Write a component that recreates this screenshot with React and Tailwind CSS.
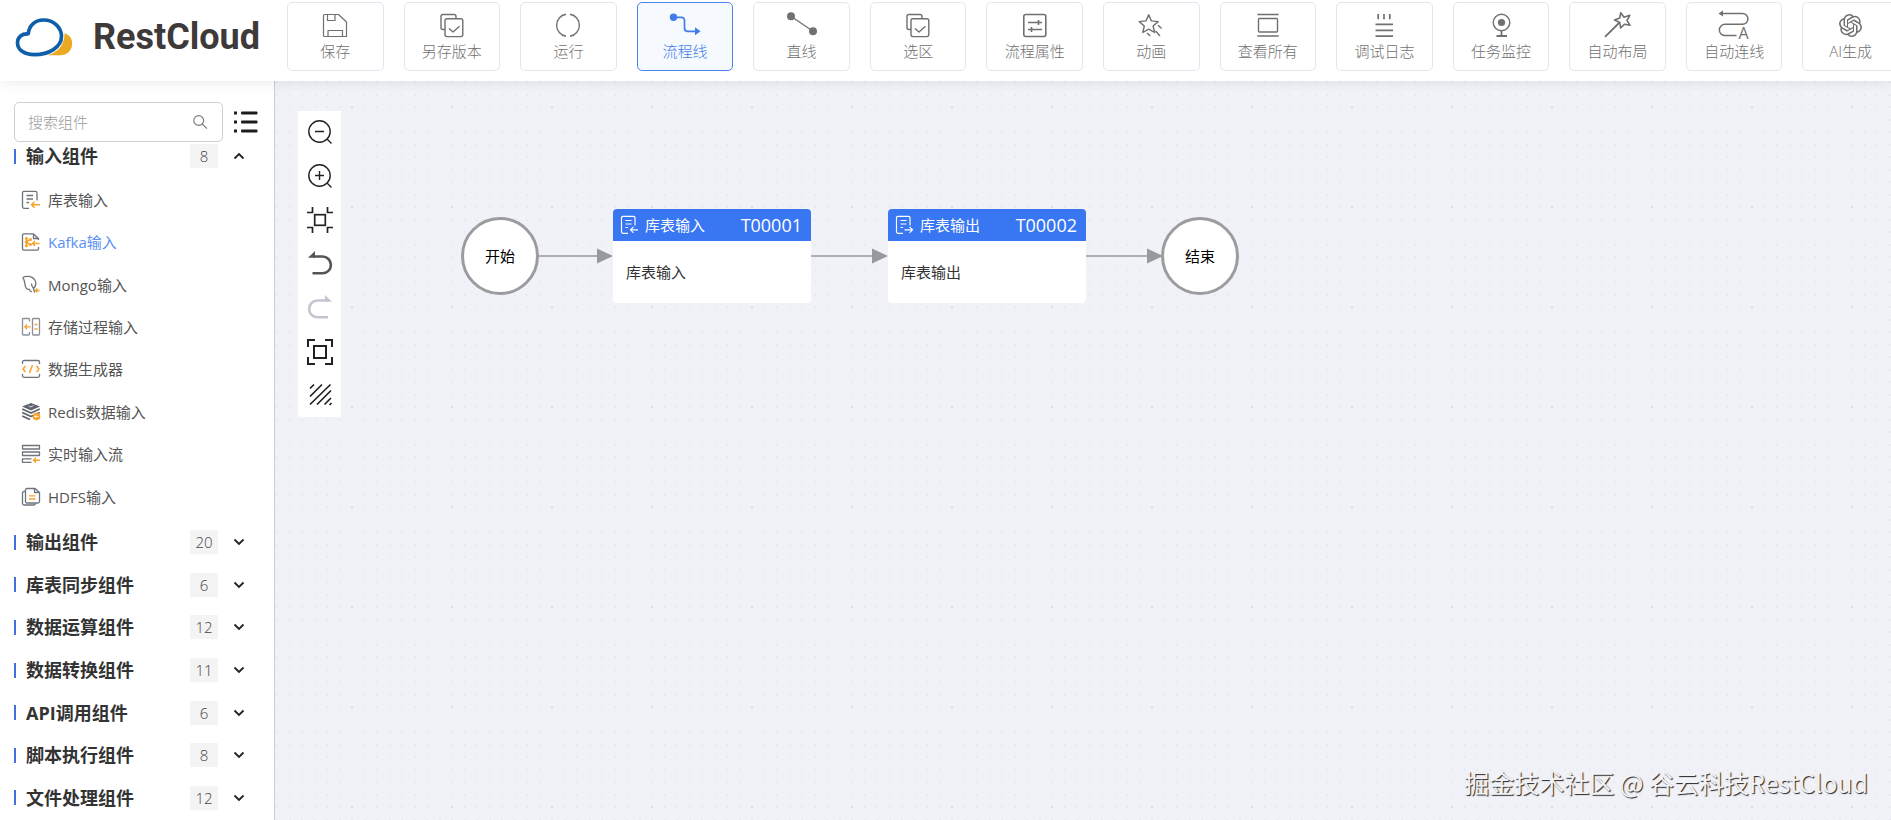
import { useState } from 'react'
import { SiOpenai } from 'react-icons/si'

/* ---------- Toolbar icons (32 x 28) ---------- */

function ToolIcon({ children }) {
  return (
    <svg viewBox="0 0 32 28" className="w-8 h-7 overflow-visible" fill="none" stroke="currentColor" strokeWidth="1.4" strokeLinejoin="round">
      {children}
    </svg>
  )
}

const SaveIcon = () => (
  <ToolIcon>
    <path d="M5.5 3.5H19.5L27.5 11V25.5H5.5a1 1 0 0 1-1-1V4.5a1 1 0 0 1 1-1z" strokeWidth="1.2" />
    <path d="M8.5 3.5V9.5H16V3.5M9 25.5V19.5H23.5V25.5" strokeWidth="1.2" />
  </ToolIcon>
)

const CopyIcon = () => (
  <ToolIcon>
    <path d="M9 18.5H7a2 2 0 0 1-2-2V5.5a2 2 0 0 1 2-2H18a2 2 0 0 1 2 2V7.5" />
    <rect x="9" y="7.8" width="17.8" height="17.8" rx="2" />
    <path d="M13 17.5L17 21L23.5 15.3" />
  </ToolIcon>
)

const RunIcon = () => (
  <ToolIcon>
    <path d="M14 3.2A11.2 11.2 0 0 0 14 25.3M18 3.2A11.2 11.2 0 0 1 18 25.3" />
  </ToolIcon>
)

const FlowIcon = () => (
  <ToolIcon>
    <circle cx="4.5" cy="6.3" r="3.7" fill="currentColor" stroke="none" />
    <path d="M4.5 6.3H12.5a3 3 0 0 1 3 3V17.3a3 3 0 0 0 3 3H27" strokeWidth="1.7" />
    <path d="M26 16.3L31.5 20.3L26 24.3z" fill="currentColor" stroke="none" />
  </ToolIcon>
)

const LineIcon = () => (
  <ToolIcon>
    <path d="M5 5.3L27 20.3" strokeWidth="1.3" />
    <circle cx="5" cy="5.3" r="4" fill="currentColor" stroke="none" />
    <circle cx="27" cy="20.3" r="4" fill="currentColor" stroke="none" />
  </ToolIcon>
)

const PropsIcon = () => (
  <ToolIcon>
    <rect x="4.8" y="3.5" width="22" height="22" rx="2" strokeWidth="1.6" />
    <path d="M9 11.5H23M19.5 9V14M9 18.5H23M12.5 16V21" strokeWidth="1.6" />
  </ToolIcon>
)

const AnimIcon = () => (
  <ToolIcon>
    <path d="M13.7 3.8L16.4 9.9L23.2 10.6L18.1 15L19.6 21.5L13.7 18.1L7.8 21.5L9.3 15L4.2 10.6L11 9.9z" />
    <path d="M23 14.3L26.6 17.5M20.6 20L25 25M12 22L15.3 25" />
  </ToolIcon>
)

const ViewAllIcon = () => (
  <ToolIcon>
    <path d="M5.3 3.5H26.7M5.3 25H26.7" />
    <rect x="6.5" y="7.5" width="19" height="13.5" rx="1" />
  </ToolIcon>
)

const LogIcon = () => (
  <ToolIcon>
    <path d="M10.2 3V8.3M16 3V8.3M21.8 3V8.3M7.5 13.3H25M7.5 19.3H25M7.5 25.2H25" strokeWidth="1.7" />
  </ToolIcon>
)

const MonitorIcon = () => (
  <ToolIcon>
    <circle cx="16.5" cy="11.5" r="8.3" />
    <circle cx="16.5" cy="11.5" r="3.6" fill="currentColor" stroke="none" />
    <path d="M16.5 20V25M11.5 25H22" strokeWidth="1.8" />
  </ToolIcon>
)

const WandIcon = () => (
  <ToolIcon>
    <path d="M3 25.8L17.5 11.5" strokeWidth="1.8" />
    <path d="M18.7 1.8L22 6.3L27.8 4.3L25 9.5L28 14.3L22.6 13.2L18.6 17L17.8 11.5L12.5 9L17.7 7z" strokeWidth="1.6" />
  </ToolIcon>
)

const AutoLineIcon = () => (
  <ToolIcon>
    <path d="M4 2.5H24.5a5.4 5.4 0 0 1 0 10.8H7a5.6 5.6 0 0 0 0 11.3H18.5" strokeWidth="1.5" />
    <path d="M0.5 2.5L5 -0.5V5.5z" fill="currentColor" stroke="none" />
    <text x="20.5" y="28" fontSize="16" fontWeight="400" fill="currentColor" stroke="none" fontFamily="Open Sans, sans-serif">A</text>
  </ToolIcon>
)

const AiIcon = () => (
  <span className="w-8 h-7 flex items-center justify-center">
    <SiOpenai size={23} />
  </span>
)

const TOOLS = [
  { label: '保存',     Icon: SaveIcon },
  { label: '另存版本', Icon: CopyIcon },
  { label: '运行',     Icon: RunIcon },
  { label: '流程线',   Icon: FlowIcon },
  { label: '直线',     Icon: LineIcon },
  { label: '选区',     Icon: CopyIcon },
  { label: '流程属性', Icon: PropsIcon },
  { label: '动画',     Icon: AnimIcon },
  { label: '查看所有', Icon: ViewAllIcon },
  { label: '调试日志', Icon: LogIcon },
  { label: '任务监控', Icon: MonitorIcon },
  { label: '自动布局', Icon: WandIcon },
  { label: '自动连线', Icon: AutoLineIcon },
  { label: 'AI生成',   Icon: AiIcon },
]

/* ---------- Component list icons (20 x 20) ---------- */

function ItemIcon({ children }) {
  return (
    <svg viewBox="0 0 20 20" className="w-5 h-5 shrink-0" fill="none" stroke="#6f747c" strokeWidth="1.3" strokeLinejoin="round">
      {children}
    </svg>
  )
}

const ORANGE = '#f7a32b'

const TableInIcon = () => (
  <ItemIcon>
    <path d="M8 18.3H3a1.5 1.5 0 0 1-1.5-1.5V2.8A1.5 1.5 0 0 1 3 1.3H14.5a1.5 1.5 0 0 1 1.5 1.5V10.5" />
    <path d="M5.5 5.5H12M5.5 9H12M5.5 12.5H8" />
    <path d="M19 14.8H10.5M13.5 11.8L10.5 14.8L13.5 17.8" stroke={ORANGE} strokeWidth="1.5" />
  </ItemIcon>
)

const KafkaIcon = () => (
  <ItemIcon>
    <path d="M17.5 15V16.8a1.3 1.3 0 0 1-1.3 1.3H2.8a1.3 1.3 0 0 1-1.3-1.3V3.2A1.3 1.3 0 0 1 2.8 1.9H12.5L17.5 6.5V8M12.5 1.9V6.5H17.5" />
    <path d="M5.5 5.5V14.5M5.5 10L9.5 7M5.5 10L9.5 13" stroke={ORANGE} strokeWidth="1.5" />
    <g fill={ORANGE} stroke="none">
      <circle cx="5.5" cy="6.5" r="1.5" /><circle cx="5.5" cy="10" r="1.8" /><circle cx="5.5" cy="13.8" r="1.5" />
      <circle cx="9.5" cy="7.5" r="1.5" /><circle cx="9.5" cy="12.5" r="1.5" />
    </g>
    <path d="M18.5 11.5H11.5M14 9L11.5 11.5L14 14" stroke={ORANGE} strokeWidth="1.4" />
  </ItemIcon>
)

const MongoIcon = () => (
  <ItemIcon>
    <path d="M1.5 2.5C5 0.5 11 1 13.5 4.5C15.5 7.5 15 11 12.5 13.5C11 12 10.5 10.5 10.5 8.5M12.5 13.5L13.5 17.5M1.5 2.5C3.5 4 3.5 6.5 4 9.5C4.3 12.5 6 14.5 8.5 14.5C8.5 15.5 9.5 16.5 11 17" />
    <path d="M18.5 15.5H14.5M16.3 13.5L14.5 15.5L16.3 17.5" stroke={ORANGE} strokeWidth="1.4" />
  </ItemIcon>
)

const ProcIcon = () => (
  <ItemIcon>
    <path d="M8.5 4.5V2.5a1 1 0 0 0-1-1H2.5a1 1 0 0 0-1 1V17a1 1 0 0 0 1 1H7.5a1 1 0 0 0 1-1V15" stroke="#8a9099" />
    <rect x="11.5" y="1.5" width="7" height="16.5" rx="1" stroke="#8a9099" />
    <path d="M9.5 9.8H3.8M6 7.5L3.8 9.8L6 12.2M13.5 7.5H16.5M13.5 12H16.5" stroke={ORANGE} />
  </ItemIcon>
)

const CodeIcon = () => (
  <ItemIcon>
    <path d="M1.5 5V3a1.5 1.5 0 0 1 1.5-1.5H17A1.5 1.5 0 0 1 18.5 3V5M1.5 15V16.8a1.5 1.5 0 0 0 1.5 1.5H17a1.5 1.5 0 0 0 1.5-1.5V15" />
    <path d="M4.5 7L2 10L4.5 13M15.5 7L18 10L15.5 13M11.5 6L8.5 14" stroke={ORANGE} strokeWidth="1.5" />
  </ItemIcon>
)

const RedisIcon = () => (
  <ItemIcon>
    <path d="M10 1L19 4.5L10 8.5L1 4.5z" fill="#5d636c" stroke="none" />
    <path d="M7.5 3.8L9.5 5L12.5 3.5" stroke="#fff" strokeWidth="0.8" />
    <path d="M1.2 7L10 11L18.8 7M1.2 10.5L10 14.5L18.8 10.5M1.2 14L9 17.5" stroke="#5d636c" strokeWidth="1.8" />
    <circle cx="15.5" cy="14.5" r="3.8" fill={ORANGE} stroke="none" />
    <path d="M17.5 14.5H13.7M15.2 13L13.7 14.5L15.2 16" stroke="#fff" strokeWidth="0.8" />
  </ItemIcon>
)

const StreamIcon = () => (
  <ItemIcon>
    <rect x="1.5" y="1.5" width="17" height="3.5" />
    <rect x="1.5" y="8" width="17" height="3.5" />
    <path d="M10.5 14.8H1.5V18.3H10.5" />
    <path d="M19 16.3H12.5M15 13.8L12.5 16.3L15 18.8" stroke={ORANGE} strokeWidth="1.5" />
  </ItemIcon>
)

const HdfsIcon = () => (
  <ItemIcon>
    <path d="M4 4.5H3A1.5 1.5 0 0 0 1.5 6V16.5A1.5 1.5 0 0 0 3 18H12.5a2 2 0 0 0 2-1.5" />
    <path d="M6 1.5H14L18.5 5.5V14.5a1.5 1.5 0 0 1-1.5 1.5H6a1.5 1.5 0 0 1-1.5-1.5V3A1.5 1.5 0 0 1 6 1.5zM13.5 1.5V5.5H18.5" />
    <path d="M8 8.8H14.5M8 12H14.5" stroke={ORANGE} />
  </ItemIcon>
)

const INPUT_ITEMS = [
  { name: '库表输入',      Icon: TableInIcon },
  { name: 'Kafka输入',     Icon: KafkaIcon },
  { name: 'Mongo输入',     Icon: MongoIcon },
  { name: '存储过程输入',  Icon: ProcIcon },
  { name: '数据生成器',    Icon: CodeIcon },
  { name: 'Redis数据输入', Icon: RedisIcon },
  { name: '实时输入流',    Icon: StreamIcon },
  { name: 'HDFS输入',      Icon: HdfsIcon },
]

const GROUPS = [
  { name: '输入组件',     count: 8, items: INPUT_ITEMS },
  { name: '输出组件',     count: 20 },
  { name: '库表同步组件', count: 6 },
  { name: '数据运算组件', count: 12 },
  { name: '数据转换组件', count: 11 },
  { name: 'API调用组件',  count: 6 },
  { name: '脚本执行组件', count: 8 },
  { name: '文件处理组件', count: 12 },
]

/* ---------- Header ---------- */

function Logo() {
  return (
    <a href="#" className="w-[287px] shrink-0 h-full flex items-center pl-[15px] pb-2">
      <svg viewBox="45 48 173 120" className="w-[58px] h-10" fill="none">
        <path d="M193 97C208 101 217 114 216 129C215 149 200 163 180 163H142C173 154 193 133 193 97z" fill="#eba922" />
        <path d="M84 99C87 72 106 57 130 57C161 57 184 79 184 106C184 139 146 161 103 161C72 161 52 146 52 125C52 108 66 97 84 99C84 99 84 101 85 103" stroke="#0f5ea8" strokeWidth="11" strokeLinejoin="round" />
      </svg>
      <span className="ml-5 font-['Roboto',sans-serif] font-bold text-[36px] leading-10 text-[#3e3a39]">RestCloud</span>
    </a>
  )
}

function Toolbar({ active, onPick }) {
  return (
    <div className="flex-1 min-w-0 overflow-hidden">
      <div className="grid grid-cols-14 gap-5 -mr-2 pt-[2px]">
        {TOOLS.map(({ label, Icon }, i) => (
          <button
            key={label}
            onClick={() => onPick(i)}
            className={`h-[69px] rounded-[5px] border flex flex-col items-center pt-2 text-[15px] leading-5 font-light whitespace-nowrap ${
              active === i ? 'border-[#4a86ea] bg-[#f6faff] text-[#3f7cea]' : 'border-[#e3e6ef] bg-white text-[#707070]'
            }`}
          >
            <Icon />
            <span className="mt-[2px]">{label}</span>
          </button>
        ))}
      </div>
    </div>
  )
}

/* ---------- Sidebar ---------- */

function Chevron({ up }) {
  return (
    <svg viewBox="0 0 12 12" className="w-3 h-3" fill="none" stroke="#222" strokeWidth="1.8">
      <path d={up ? 'M1.5 8.5L6 4L10.5 8.5' : 'M1.5 3.5L6 8L10.5 3.5'} />
    </svg>
  )
}

function Group({ group, open, onToggle }) {
  const showItems = open && group.items
  return (
    <div className={`flex flex-col ${showItems ? 'flex-[9] mb-[3px]' : 'flex-1 max-h-11'}`}>
      <button onClick={onToggle} className="flex-1 flex items-center pl-[14px] pr-[29px] text-left">
        <span className="w-[2px] h-[15px] bg-[#4070dc]" />
        <span className="ml-[10px] flex-1 text-lg leading-6 font-bold text-[#333]">{group.name}</span>
        <span className="w-7 h-6 bg-[#f4f4f4] text-center text-[15px] leading-6 font-light text-[#444]">{group.count}</span>
        <span className="ml-[15px]"><Chevron up={showItems} /></span>
      </button>
      {showItems && (
        <ul className="flex-[8] flex flex-col pt-px">
          {group.items.map(({ name, Icon }) => (
            <li key={name} className="flex-1 flex">
              <a
                href="#"
                className={`flex-1 flex items-center pl-[21px] gap-[7px] text-[15px] leading-5 ${
                  name === 'Kafka输入' ? 'text-[#5a90f2]' : 'text-[#555]'
                }`}
              >
                <Icon />
                {name}
              </a>
            </li>
          ))}
        </ul>
      )}
    </div>
  )
}

function Sidebar() {
  const [open, setOpen] = useState('输入组件')
  return (
    <aside className="w-[275px] shrink-0 flex flex-col bg-white border-r border-[#c9ccd3] pt-[21px]">
      <div className="relative z-10 flex items-center pl-[14px]">
        <label className="w-[209px] h-10 flex items-center rounded-[5px] border border-[#cfd0d4] bg-white pl-[13px] pr-[14px]">
          <input
            type="text"
            aria-label="搜索组件"
            placeholder="搜索组件"
            className="flex-1 min-w-0 text-[15px] leading-5 font-light outline-none placeholder:text-[#999]"
          />
          <svg viewBox="0 0 16 16" className="w-4 h-4" fill="none" stroke="#777" strokeWidth="1.1">
            <circle cx="6.7" cy="6.5" r="4.9" />
            <path d="M10.2 10L15 14.7" />
          </svg>
        </label>
        <button aria-label="列表" className="ml-[11px]">
          <svg viewBox="0 0 24 24" className="w-6 h-6" fill="#1c1c1c">
            <rect x="0" y="1.5" width="3" height="3" /><rect x="7" y="1.5" width="16.5" height="3" rx="1" />
            <rect x="0" y="10.5" width="3" height="3" /><rect x="7" y="10.5" width="16.5" height="3" rx="1" />
            <rect x="0" y="19.5" width="3" height="3" /><rect x="7" y="19.5" width="16.5" height="3" rx="1" />
          </svg>
        </button>
      </div>
      <nav className="flex-1 min-h-0 -mt-[7px] pb-px flex flex-col">
        {GROUPS.map(g => (
          <Group key={g.name} group={g} open={open === g.name} onToggle={() => setOpen(open === g.name ? '' : g.name)} />
        ))}
      </nav>
    </aside>
  )
}

/* ---------- Canvas ---------- */

const VIEW_TOOLS = [
  {
    name: '缩小',
    icon: <g strokeWidth="1.4"><circle cx="11.5" cy="11.5" r="10.7" /><path d="M7 11.5H16M19 19L23.5 23.5" /></g>,
  },
  {
    name: '放大',
    icon: <g strokeWidth="1.4"><circle cx="11.5" cy="11.5" r="10.7" /><path d="M7 11.5H16M11.5 7V16M19 19L23.5 23.5" /></g>,
  },
  {
    name: '适应画布',
    icon: <g strokeWidth="1.7"><rect x="6.7" y="6.7" width="10.6" height="10.6" /><path d="M-1 4.5H4.5V-1M19.5 -1V4.5H25M-1 19.5H4.5V25M25 19.5H19.5V25" /></g>,
  },
  {
    name: '撤销',
    icon: <g stroke="#555" strokeWidth="2.6"><path d="M5 4.5H14.5a8.2 8.2 0 0 1 0 16.8H4.5" /><path d="M0 5.8L7 -1V5.8z" fill="#555" stroke="none" /></g>,
  },
  {
    name: '重做',
    icon: <g stroke="#c3c5d2" strokeWidth="2.6"><path d="M19 4.5H9.5a8.2 8.2 0 0 0 0 16.8H20" /><path d="M24 5.8L17 -1V5.8z" fill="#c3c5d2" stroke="none" /></g>,
  },
  {
    name: '全屏',
    icon: <g strokeWidth="2"><rect x="6" y="6" width="12" height="12" /><path d="M0 7V0H7M17 0H24V7M0 17V24H7M17 24H24V17" /></g>,
  },
  {
    name: '网格',
    icon: <g strokeWidth="1.7"><path d="M2 4.5L6 0.5M2 12.5L14 0.5M2 20.5L22.5 0.5M9 20.5L23 6.5M16.5 20.5L23 14M21.5 21L23.5 19" /></g>,
  },
]

function ViewTools() {
  return (
    <div className="absolute left-[23px] top-[30px] w-[43px] py-[9px] bg-white flex flex-col items-center gap-5">
      {VIEW_TOOLS.map(t => (
        <button key={t.name} aria-label={t.name}>
          <svg viewBox="0 0 24 24" className="block w-6 h-6 overflow-visible" fill="none" stroke="#222">{t.icon}</svg>
        </button>
      ))}
    </div>
  )
}

function Terminal({ label, place }) {
  return (
    <div className={`absolute w-[78px] h-[78px] rounded-full border-[3px] border-[#9b9c9f] bg-white flex items-center justify-center text-[15px] leading-5 text-black ${place}`}>
      {label}
    </div>
  )
}

function TaskNode({ name, id, place, out }) {
  return (
    <div className={`absolute w-[198px] rounded-[4px] overflow-hidden bg-white ${place}`}>
      <div className="h-8 bg-[#3876f2] text-white flex items-center pl-[7px] pr-[9px]">
        <svg viewBox="0 0 20 20" className="w-5 h-5" fill="none" stroke="currentColor" strokeWidth="1.2">
          <path d="M8 18.3H3a1.5 1.5 0 0 1-1.5-1.5V2.8A1.5 1.5 0 0 1 3 1.3H13.5a1.5 1.5 0 0 1 1.5 1.5V10.5" />
          <path d="M5.5 5.5H11.5M5.5 9H11.5M5.5 12.5H8" />
          <path d={out ? 'M9.5 14.8H17.5M14.5 11.8L17.5 14.8L14.5 17.8' : 'M18 14.8H10.5M13.5 11.8L10.5 14.8L13.5 17.8'} />
        </svg>
        <span className="ml-[5px] flex-1 text-[15px] leading-5">{name}</span>
        <span className="text-lg leading-6">{id}</span>
      </div>
      <div className="h-[62px] flex items-center pl-[13px] text-[15px] leading-5 text-[#333]">{name}</div>
    </div>
  )
}

function Canvas() {
  return (
    <main className="relative flex-1 min-w-0 overflow-hidden bg-[#f0f2f8]">
      <svg className="absolute inset-0 w-full h-full">
        <defs>
          <pattern id="dots" width="25" height="25" patternUnits="userSpaceOnUse">
            <g fill="#e8eaf1">
              <rect x="1" y="0" width="2" height="2" /><rect x="14" y="0" width="2" height="2" />
              <rect x="1" y="13" width="2" height="2" /><rect x="14" y="13" width="2" height="2" />
            </g>
          </pattern>
          <pattern id="marks" width="100" height="100" patternUnits="userSpaceOnUse">
            <rect x="76" y="25" width="2" height="2" fill="#dcdee6" />
          </pattern>
        </defs>
        <rect width="100%" height="100%" fill="url(#dots)" />
        <rect width="100%" height="100%" fill="url(#marks)" />
        {/* Edges */}
        <g stroke="#aeb0b4" strokeWidth="2">
          <path d="M264 175H324M536 175H599M811 175H874" />
        </g>
        <g fill="#97999d">
          <path d="M322 167.5L338 175L322 182.5zM597 167.5L613 175L597 182.5zM872 167.5L888 175L872 182.5z" />
        </g>
      </svg>
      <ViewTools />
      <Terminal label="开始" place="left-[186px] top-[136px]" />
      <TaskNode name="库表输入" id="T00001" place="left-[338px] top-[128px]" />
      <TaskNode name="库表输出" id="T00002" place="left-[613px] top-[128px]" out />
      <Terminal label="结束" place="left-[886px] top-[136px]" />
      <div className="absolute right-[23px] bottom-5 text-[25px] leading-9 text-[#f2f3f7] font-['Noto_Sans_CJK_SC',sans-serif] [text-shadow:1px_1px_1px_#222]">
        掘金技术社区 @ 谷云科技RestCloud
      </div>
    </main>
  )
}

export default function App() {
  const [active, setActive] = useState(3)
  return (
    <div className="h-screen flex flex-col overflow-hidden bg-white font-['Open_Sans','Noto_Sans_CJK_SC',sans-serif]">
      <header className="relative z-20 h-[81px] shrink-0 flex bg-white shadow-[0_2px_12px_rgba(0,0,0,0.08)]">
        <Logo />
        <Toolbar active={active} onPick={setActive} />
      </header>
      <div className="flex-1 min-h-0 flex">
        <Sidebar />
        <Canvas />
      </div>
    </div>
  )
}
